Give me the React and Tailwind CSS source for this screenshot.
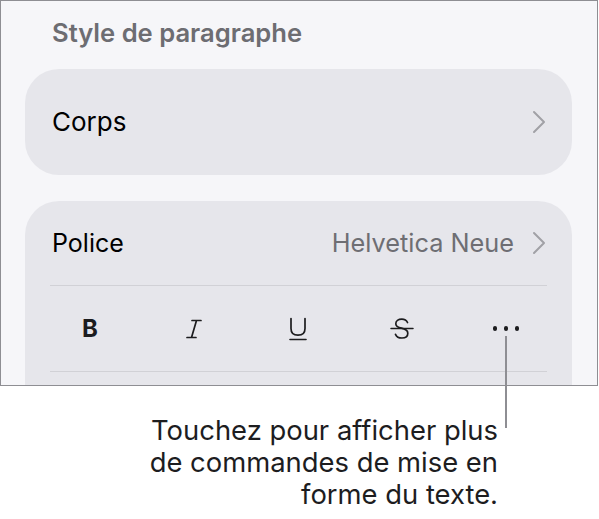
import React from "react";

const Chevron = () => (
  <svg width="14" height="24" viewBox="0 0 14 24" fill="none" className="shrink-0">
    <path d="M2 2 L12 12 L2 22" stroke="#a1a1a6" strokeWidth="2" strokeLinecap="round" strokeLinejoin="round" />
  </svg>
);

export default function App() {
  const font = { fontFamily: "Inter, 'Liberation Sans', sans-serif" };
  return (
    <div className="relative w-[599px] h-[519px] bg-white overflow-hidden" style={font}>
      <div className="w-[598px] h-[386px] border border-[#8e8e93] bg-[#f6f6f9] overflow-hidden">
        <div className="pt-[17px] pl-[51px] text-[25.6px] leading-[30px] font-semibold text-[#6d6d72]">
          Style de paragraphe
        </div>
        <div className="mt-[21px] ml-[24px] w-[547px] h-[106px] rounded-[34px] bg-[#e6e6eb] flex items-center justify-between pl-[27px] pr-[26px]">
          <span className="text-[26px] leading-[30px] text-black">Corps</span>
          <Chevron />
        </div>
        <div className="mt-[26px] ml-[24px] w-[547px] h-[220px] rounded-t-[34px] bg-[#e6e6eb]">
          <div className="h-[84px] flex items-center justify-between pl-[27px] pr-[26px]">
            <span className="text-[25px] leading-[30px] text-black">Police</span>
            <div className="flex items-center gap-[18px]">
              <span className="text-[25.3px] leading-[30px] text-[#6e6e73]">Helvetica Neue</span>
              <Chevron />
            </div>
          </div>
          <div className="mx-[25px] h-px bg-[#d1d1d6]" />
          <div className="h-[85px] flex items-center pl-[13px]">
            <div className="w-[104px] flex justify-center">
              <span className="text-[24px] font-bold leading-none text-[#1c1c1e]">B</span>
            </div>
            <div className="w-[104px] flex justify-center">
              <svg width="16" height="20" viewBox="0 0 16 20" fill="none">
                <path d="M6 1.5 H15 M1 18.5 H10 M10.5 1.5 L5.5 18.5" stroke="#1c1c1e" strokeWidth="1.7" strokeLinecap="round" />
              </svg>
            </div>
            <div className="w-[104px] flex justify-center">
              <svg width="18" height="24" viewBox="0 0 18 24" fill="none">
                <path d="M2 1.5 V11.5 C2 16 5 18.2 9 18.2 C13 18.2 16 16 16 11.5 V1.5" stroke="#1c1c1e" strokeWidth="1.7" strokeLinecap="round" />
                <path d="M1 22.5 H17" stroke="#1c1c1e" strokeWidth="1.6" strokeLinecap="round" />
              </svg>
            </div>
            <div className="w-[104px] flex justify-center">
              <svg width="24" height="22" viewBox="0 0 24 22" fill="none">
                <path d="M17.5 4.5 C16.5 2.3 14.5 1.2 11.8 1.2 C8.3 1.2 5.8 3 5.8 5.7 C5.8 8.3 7.8 9.4 11.5 10.2 C15.5 11.1 17.8 12.3 17.8 15.2 C17.8 18.3 15.2 20 11.9 20 C8.8 20 6.5 18.7 5.5 16.3" stroke="#1c1c1e" strokeWidth="1.7" strokeLinecap="round" />
                <path d="M1 10.5 H23" stroke="#1c1c1e" strokeWidth="1.5" strokeLinecap="round" />
              </svg>
            </div>
            <div className="w-[104px] flex justify-center gap-[6.5px]">
              <span className="w-[4.5px] h-[4.5px] rounded-full bg-[#1c1c1e]" />
              <span className="w-[4.5px] h-[4.5px] rounded-full bg-[#1c1c1e]" />
              <span className="w-[4.5px] h-[4.5px] rounded-full bg-[#1c1c1e]" />
            </div>
          </div>
          <div className="mx-[25px] h-px bg-[#d1d1d6]" />
        </div>
      </div>
      <div className="mt-[28px] pr-[101px] text-right text-[27.4px] leading-[32px] text-[#1d1d1f]">
        Touchez pour afficher plus
        <br />
        de commandes de mise en
        <br />
        forme du texte.
      </div>
      <div className="absolute left-[505px] top-[336px] w-[2px] h-[92px] bg-[#8e8e93]" />
    </div>
  );
}
